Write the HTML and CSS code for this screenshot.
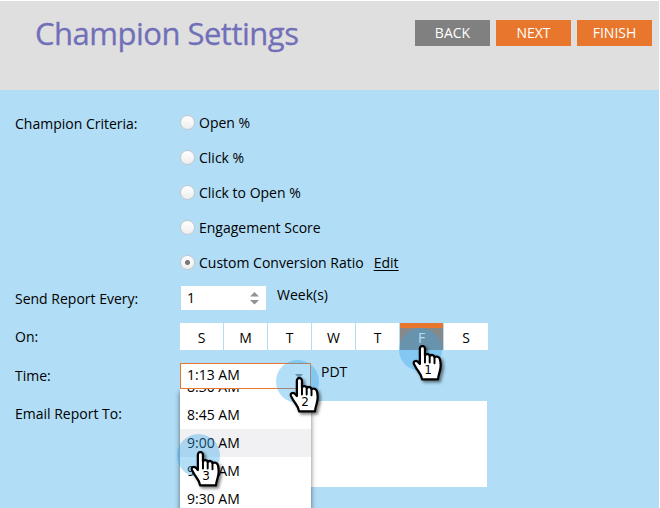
FILE: index.html
```html
<!DOCTYPE html>
<html lang="en">
<head>
<meta charset="utf-8">
<title>Champion Settings</title>
<link rel="stylesheet" href="styles.css">
</head>
<body>
<svg class="defs" aria-hidden="true">
  <symbol id="hand" viewBox="0 0 36 42">
    <path d="M7.6 3.6C7.6 .2 12.6.2 12.6 3.6V10.2C13.6 8.2 16.9 8.5 17.2 10.6C18.8 9.2 21.6 9.6 21.9 11.8C23.8 10.6 26.6 11.6 27.2 14C28.2 18 28.2 22 27 26C26.2 28.8 25.5 31 25.3 33.6H9.8C9.6 31 8.2 28.6 6.6 26.4C4.6 23.6 3 20.8 1.8 18.5C.9 16.2 3.6 14.6 5.4 16.2L7.6 18.6Z" fill="#fff" stroke="#000" stroke-width="2.2" stroke-linejoin="round"/>
    <path d="M12.6 9.5V17M17.2 10.5V17.2M21.9 11.8V17.8" fill="none" stroke="#000" stroke-width="1.9" stroke-linecap="round"/>
  </symbol>
</svg>
<div class="page">
  <header class="header">
    <h1 class="title">Champion Settings</h1>
    <div class="actions">
      <button class="btn btn-back">BACK</button>
      <button class="btn">NEXT</button>
      <button class="btn">FINISH</button>
    </div>
  </header>
  <main class="form">
    <div class="label criteria-label">Champion Criteria:</div>
    <div class="criteria">
      <label class="option"><span class="radio"></span>Open %</label>
      <label class="option"><span class="radio"></span>Click %</label>
      <label class="option"><span class="radio"></span>Click to Open %</label>
      <label class="option"><span class="radio"></span>Engagement Score</label>
      <div class="option"><span class="radio checked"></span>Custom Conversion Ratio<a class="edit">Edit</a></div>
    </div>

    <div class="label">Send Report Every:</div>
    <div class="field every">
      <div class="spinner"><span>1</span>
        <svg width="9" height="13" viewBox="0 0 9 13"><path d="M0 4.5 4.5 0 9 4.5ZM0 8 9 8 4.5 12.5Z" fill="#929292"/></svg>
      </div>
      <span class="unit">Week(s)</span>
    </div>

    <div class="label on-label">On:</div>
    <div class="days">
      <span class="day">S</span><span class="day">M</span><span class="day">T</span><span class="day">W</span><span class="day">T</span><span class="day selected">F</span><span class="day">S</span>
    </div>

    <div class="label time-label">Time:</div>
    <div class="field time">
      <div class="combo"><span>1:13 AM</span>
        <svg width="8" height="5" viewBox="0 0 8 5"><path d="M0 0H8L4 4.5Z" fill="#888"/></svg>
        <div class="menu">
          <div class="item">8:30 AM</div>
          <div class="item">8:45 AM</div>
          <div class="item hover">9:00 AM</div>
          <div class="item">9:15 AM</div>
          <div class="item">9:30 AM</div>
        </div>
      </div>
      <span class="zone">PDT</span>
    </div>

    <div class="label">Email Report To:</div>
    <div class="email"></div>
  </main>
  <div class="step step-1"><svg class="hand"><use href="#hand"/></svg><span class="num">1</span></div>
  <div class="step step-2"><svg class="hand"><use href="#hand"/></svg><span class="num">2</span></div>
  <div class="step step-3"><svg class="hand"><use href="#hand"/></svg><span class="num">3</span></div>
</div>
</body>
</html>
```
FILE: styles.css
```css
* { box-sizing: border-box; }
body {
  margin: 0;
  background: #fff;
  font: 14px/20px "Open Sans", "Noto Sans", sans-serif;
  color: #000;
}
.defs { position: absolute; width: 0; height: 0; }
.page {
  position: relative;
  width: 659px;
  height: 508px;
  padding-top: 1px;
  overflow: hidden;
}
.header {
  display: flex;
  justify-content: space-between;
  height: 89px;
  padding: 0 7px 0 35px;
  background: #dfdfdf;
}
.title {
  margin: 10px 0 0;
  font-size: 31px;
  line-height: 44px;
  font-weight: 400;
  letter-spacing: -.5px;
  color: #716fb8;
  -webkit-text-stroke: .3px #716fb8;
  white-space: nowrap;
}
.actions { display: flex; gap: 6px; margin-top: 19px; }
.btn {
  width: 75px;
  height: 26px;
  padding: 0;
  border: 0;
  background: #e8762d;
  color: #fff;
  font: 14px/26px "Open Sans", sans-serif;
}
.btn-back { background: #808080; }
.form {
  display: grid;
  grid-template-columns: 165px 1fr;
  grid-template-rows: 196px 37px 39px 39px 107px;
  height: 418px;
  padding-left: 15px;
  background: #b1ddf6;
}
.criteria { padding-top: 15px; }
.option { display: flex; align-items: center; height: 35px; }
.radio {
  width: 15px;
  height: 15px;
  margin-right: 4px;
  border: 1px solid #c2c8cc;
  border-radius: 50%;
  background: linear-gradient(#fff, #eee);
}
.checked { background: radial-gradient(circle, #777 0 2.1px, transparent 2.9px), linear-gradient(#fff, #eee); }
.edit { margin-left: 10px; text-decoration: underline; text-underline-offset: 2px; }
.label { padding-top: 3px; }
.criteria-label { padding-top: 24px; }
.on-label, .time-label { padding-top: 4px; }
.field { display: flex; align-items: flex-start; }
.spinner {
  display: flex;
  align-items: center;
  justify-content: space-between;
  width: 85px;
  height: 24px;
  margin-left: 1px;
  padding: 0 7px 0 6px;
  background: #fff;
}
.unit { margin: -1px 0 0 11px; }
.days { display: flex; gap: 1px; }
.day {
  width: 43px;
  height: 27px;
  background: #fff;
  text-align: center;
  line-height: 30px;
}
.day:last-child { width: 44px; }
.selected { border-top: 5px solid #e8762d; background: #888; color: #fff; line-height: 20px; }
.combo {
  position: relative;
  display: flex;
  align-items: center;
  justify-content: space-between;
  width: 131px;
  height: 26px;
  padding: 0 7px 0 6px;
  border: 1px solid #e8762d;
  background: #fff;
}
.combo > span { margin-top: -2px; }
.time { margin-top: 0; }
.zone { margin-left: 10px; }
.menu {
  position: absolute;
  left: -1px;
  top: 25px;
  width: 131px;
  height: 125px;
  overflow: hidden;
  background: #fff;
  box-shadow: 0 3px 5px rgba(0, 0, 0, .55);
  clip-path: inset(0 -10px -10px -10px);
}
.time { padding-top: 1px; }
.zone { margin-top: -1px; }
.item { height: 28px; padding-left: 7px; line-height: 28px; }
.item:first-child { margin-top: -16px; }
.hover { background: #f1f1f4; }
.email { width: 307px; height: 86px; background: #fff; }
.step {
  position: absolute;
  width: 43px;
  height: 43px;
  border-radius: 50%;
  background: rgba(50, 165, 235, .37);
}
.step-1 { left: 399px; top: 328px; }
.step-2 { left: 276px; top: 360px; }
.step-3 { left: 177px; top: 434px; }
.hand {
  position: absolute;
  left: 13px;
  top: 17px;
  width: 37px;
  height: 43px;
  filter: drop-shadow(2px 2px 1.5px rgba(0, 0, 0, .5));
}
.num {
  position: absolute;
  left: 23px;
  top: 35px;
  width: 12px;
  font: 12px/14px "DejaVu Sans", sans-serif;
  text-align: center;
}
```
